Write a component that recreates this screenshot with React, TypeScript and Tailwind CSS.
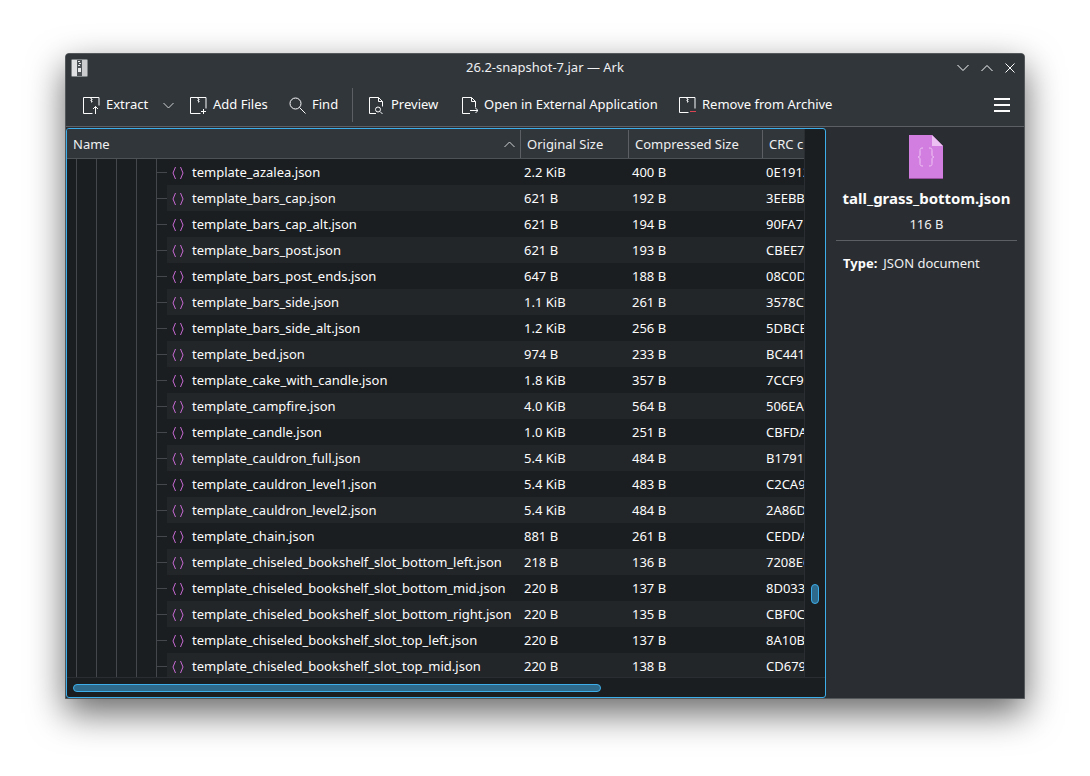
import React from 'react';

const rows = [
    ['template_azalea.json', '2.2 KiB', '400 B', '0E1912'],
    ['template_bars_cap.json', '621 B', '192 B', '3EEBB'],
    ['template_bars_cap_alt.json', '621 B', '194 B', '90FA7'],
    ['template_bars_post.json', '621 B', '193 B', 'CBEE7'],
    ['template_bars_post_ends.json', '647 B', '188 B', '08C0D'],
    ['template_bars_side.json', '1.1 KiB', '261 B', '3578C'],
    ['template_bars_side_alt.json', '1.2 KiB', '256 B', '5DBCE'],
    ['template_bed.json', '974 B', '233 B', 'BC441'],
    ['template_cake_with_candle.json', '1.8 KiB', '357 B', '7CCF9'],
    ['template_campfire.json', '4.0 KiB', '564 B', '506EA'],
    ['template_candle.json', '1.0 KiB', '251 B', 'CBFDA'],
    ['template_cauldron_full.json', '5.4 KiB', '484 B', 'B1791'],
    ['template_cauldron_level1.json', '5.4 KiB', '483 B', 'C2CA9'],
    ['template_cauldron_level2.json', '5.4 KiB', '484 B', '2A86D'],
    ['template_chain.json', '881 B', '261 B', 'CEDDA'],
    ['template_chiseled_bookshelf_slot_bottom_left.json', '218 B', '136 B', '7208E6'],
    ['template_chiseled_bookshelf_slot_bottom_mid.json', '220 B', '137 B', '8D033'],
    ['template_chiseled_bookshelf_slot_bottom_right.json', '220 B', '135 B', 'CBF0C'],
    ['template_chiseled_bookshelf_slot_top_left.json', '220 B', '137 B', '8A10B'],
    ['template_chiseled_bookshelf_slot_top_mid.json', '220 B', '138 B', 'CD679'],
];

const ExtractIcon = () => (
    <svg width="17" height="17" viewBox="0 0 17 17" className="text-[#fcfcfc]">
        <path d="M.5 16.500V.5h15.500v8M.5 16.500h9" fill="none" stroke="currentColor" />
        <path d="M8 1v1h1v1H8v1h1v1H8" fill="none" stroke="currentColor" />
        <path d="M12.500 17V9.500M10 12l2.500-2.500L15 12" fill="none" stroke="currentColor" />
    </svg>
);

const AddIcon = () => (
    <svg width="17" height="17" viewBox="0 0 17 17" className="text-[#fcfcfc]">
        <path d="M.5 16.500V.5h15.500v11M.5 16.500h10" fill="none" stroke="currentColor" />
        <path d="M8 1v1h1v1H8v1h1v1H8" fill="none" stroke="currentColor" />
        <path d="M13.500 12v5M11 14.500h5" fill="none" stroke="currentColor" />
    </svg>
);

const RemoveIcon = () => (
    <svg width="17" height="17" viewBox="0 0 17 17" className="text-[#fcfcfc]">
        <path d="M.5 15.500V.5h15.500v11M.5 15.500h9" fill="none" stroke="currentColor" />
        <path d="M8 1v1h1v1H8v1h1v1H8" fill="none" stroke="currentColor" />
        <path d="M11 14.500h6" fill="none" stroke="#da4453" />
    </svg>
);

const PreviewIcon = () => (
    <svg width="17" height="17" viewBox="0 0 17 17" className="text-[#fcfcfc]">
        <path d="M8 16.500H1.500V.5h9l4 4v5M10.500.5v4h4" fill="none" stroke="currentColor" />
        <circle cx="10" cy="12.500" r="2.500" fill="none" stroke="currentColor" />
        <path d="M12 14.500l2.500 2.500" fill="none" stroke="currentColor" />
    </svg>
);

const OpenIcon = () => (
    <svg width="17" height="17" viewBox="0 0 17 17" className="text-[#fcfcfc]">
        <path d="M9 16.500H1.500V.5h9l4 4v6M10.500.5v4h4" fill="none" stroke="currentColor" />
        <path d="M9 13.500h8M14.500 11l2.500 2.500-2.500 2.500" fill="none" stroke="currentColor" />
    </svg>
);

const JsonGlyph = () => (
    <svg width="12" height="14" viewBox="0 0 12 14" className="text-[#c86ad4]">
        <path d="M3.500 1 1 7l2.500 6M8.500 1 11 7l-2.500 6" fill="none" stroke="currentColor" />
    </svg>
);

const JsonFileIcon = () => (
    <svg width="34" height="44" viewBox="0 0 34 44" className="-ml-px">
        <path d="M0 0h23l11 11v33H0z" fill="#d27de0" />
        <path d="M0 43h34v1H0z" fill="#99509f" />
        <path d="M23 0l11 11H23z" fill="#ecc0f2" />
        <path
            d="M14 13c-3 0-3 1-3 3v4c0 1-1 2-2 2 1 0 2 1 2 2v4c0 2 0 3 3 3M20 13c3 0 3 1 3 3v4c0 1 1 2 2 2-1 0-2 1-2 2v4c0 2 0 3-3 3"
            fill="none"
            stroke="#f0c8f5"
        />
    </svg>
);

const ArkIcon = () => (
    <svg width="17" height="18" viewBox="0 0 17 18">
        <rect x="0.500" y="0.500" width="16" height="17" rx="1" fill="#c9cbcd" stroke="#7f8487" />
        <rect x="1" y="1" width="5" height="16" fill="#dfe0e1" />
        <rect x="6" y="1" width="5" height="16" fill="#4d5357" />
        <path d="M7 2h2v1H7zM8 4h2v1H8zM7 6h2v1H7zM7 9h3v4H7z" fill="#e8e9ea" />
    </svg>
);

const ToolButton = ({ icon, label, className }: { icon: React.ReactNode; label: string; className: string }) => (
    <div className={`flex items-center gap-[6px] ${className}`}>
        {icon}
        <span>{label}</span>
    </div>
);

const App: React.FC = () => {
    return (
        <div
            className="h-[776px] w-[1090px] overflow-hidden bg-white pl-[65px] pt-[53px] text-[13px] text-[#fcfcfc]"
            style={{ fontFamily: '"Noto Sans", sans-serif' }}
        >
            <div className="flex h-[646px] w-[960px] flex-col overflow-hidden rounded-t-[4px] border border-[#54585b] bg-[#2a2e32] shadow-[0_14px_36px_rgba(0,0,0,0.6)]">
                {/* Title bar */}
                <div className="relative flex h-[30px] shrink-0 items-center justify-between bg-[#31363b] pb-[2px] pl-[5px] pr-[9px]">
                    <ArkIcon />
                    <span className="absolute inset-x-0 text-center text-[#eff0f1]">26.2-snapshot-7.jar — Ark</span>
                    <div className="flex items-center gap-[12px]">
                        <svg width="12" height="8" viewBox="0 0 12 8"><path d="M.5 1l5.500 5.500L11.500 1" fill="none" stroke="#fcfcfc" /></svg>
                        <svg width="12" height="8" viewBox="0 0 12 8"><path d="M.5 7L6 1.500 11.500 7" fill="none" stroke="#fcfcfc" /></svg>
                        <svg width="10" height="10" viewBox="0 0 10 10"><path d="M.5.5l9 9M9.500.5l-9 9" fill="none" stroke="#fcfcfc" /></svg>
                    </div>
                </div>

                {/* Toolbar */}
                <div className="flex h-[43px] shrink-0 items-center border-b border-[#5c6064] bg-[#31363b] pl-[17px] pr-[14px]">
                    <ToolButton icon={<ExtractIcon />} label="Extract" className="w-[80px]" />
                    <svg width="11" height="7" viewBox="0 0 11 7" className="mr-[16px]"><path d="M.5 1l5 5 5-5" fill="none" stroke="#d0d2d3" /></svg>
                    <ToolButton icon={<AddIcon />} label="Add Files" className="w-[99px]" />
                    <ToolButton icon={<svg width="17" height="17" viewBox="0 0 17 17"><circle cx="6.500" cy="6.500" r="5.500" fill="none" stroke="#fcfcfc" /><path d="M10.500 10.500l6 6" stroke="#fcfcfc" /></svg>} label="Find" className="w-[63px]" />
                    <div className="mr-[15px] h-[34px] w-px bg-[#5c6064]" />
                    <ToolButton icon={<PreviewIcon />} label="Preview" className="w-[93px]" />
                    <ToolButton icon={<OpenIcon />} label="Open in External Application" className="w-[218px]" />
                    <ToolButton icon={<RemoveIcon />} label="Remove from Archive" className="flex-1" />
                    <div className="flex w-[16px] flex-col gap-[4px]">
                        <div className="h-[2px] bg-[#fcfcfc]" />
                        <div className="h-[2px] bg-[#fcfcfc]" />
                        <div className="h-[2px] bg-[#fcfcfc]" />
                    </div>
                </div>

                <div className="flex min-h-0 flex-1">
                    {/* File list */}
                    <div className="mt-px flex h-[570px] w-[760px] shrink-0 flex-col overflow-hidden rounded-[3px] border border-[#3daee9] bg-[#1b1e20]">
                        <div className="flex min-h-0 flex-1">
                            <div className="flex min-w-0 flex-1 flex-col">
                                <div className="flex h-[30px] shrink-0 border-b border-[#4d5256] bg-[#31363b] pt-px text-[#eff0f1]">
                                    <div className="flex w-[454px] items-center justify-between border-r border-[#5c6064] pl-[6px] pr-[5px] pt-px">
                                        <span>Name</span>
                                        <svg width="11" height="7" viewBox="0 0 11 7"><path d="M.5 6l5-5 5 5" fill="none" stroke="#d0d2d3" /></svg>
                                    </div>
                                    <div className="flex w-[108px] items-center border-r border-[#5c6064] pl-[6px] pt-px">Original Size</div>
                                    <div className="flex w-[134px] items-center border-r border-[#5c6064] pl-[6px] pt-px">Compressed Size</div>
                                    <div className="flex flex-1 items-center overflow-hidden whitespace-nowrap pl-[6px] pt-px">CRC c</div>
                                </div>
                                <div className="min-h-0 flex-1 overflow-hidden">
                                    {rows.map((row, i) => (
                                        <div key={row[0]} className="flex h-[26px]">
                                            <div className="flex w-[100px] shrink-0 self-stretch pl-[9px]">
                                                {[0, 1, 2, 3].map((g) => (
                                                    <div key={g} className="w-[20px] border-l border-[#44484c]" />
                                                ))}
                                                <div className="flex w-[11px] items-center border-l border-[#44484c]">
                                                    <div className="h-px w-full bg-[#44484c]" />
                                                </div>
                                            </div>
                                            <div className={`flex min-w-0 flex-1 items-center pt-[2px] ${i % 2 === 1 ? 'bg-[#232629]' : ''}`}>
                                                <div className="flex w-[354px] shrink-0 items-center gap-[8px] pl-[5px]">
                                                    <JsonGlyph />
                                                    <span className="whitespace-nowrap">{row[0]}</span>
                                                </div>
                                                <div className="w-[108px] shrink-0 pl-[3px]">{row[1]}</div>
                                                <div className="w-[134px] shrink-0 pl-[3px]">{row[2]}</div>
                                                <div className="min-w-0 flex-1 overflow-hidden whitespace-nowrap pl-[3px]">{row[3]}</div>
                                            </div>
                                        </div>
                                    ))}
                                </div>
                            </div>
                            {/* Vertical scrollbar */}
                            <div className="flex w-[21px] shrink-0 flex-col border-l border-[#2a2e32] pl-[6px] pt-[455px]">
                                <div className="h-[20px] w-[8px] rounded-full border border-[#3daee9] bg-[#2d6a8c]" />
                            </div>
                        </div>
                        {/* Horizontal scrollbar */}
                        <div className="flex h-[20px] shrink-0 items-center border-t border-[#2a2e32] pl-[6px]">
                            <div className="h-[8px] w-[528px] rounded-full border border-[#3daee9] bg-[#2d6a8c]" />
                        </div>
                    </div>

                    {/* Details */}
                    <div className="flex min-w-0 flex-1 flex-col items-center pl-[3px] pt-[8px]">
                        <JsonFileIcon />
                        <div className="mt-[8px] text-[15px] font-bold text-[#fcfcfc]">tall_grass_bottom.json</div>
                        <div className="mt-[5px] text-[#eff0f1]">116 B</div>
                        <div className="mt-[6px] h-px w-[181px] bg-[#5c6064]" />
                        <div className="mt-[13px] flex w-[181px] gap-[6px] pl-[7px]">
                            <span className="font-bold">Type:</span>
                            <span className="text-[#eff0f1]">JSON document</span>
                        </div>
                    </div>
                </div>
            </div>
        </div>
    );
};

export default App;
